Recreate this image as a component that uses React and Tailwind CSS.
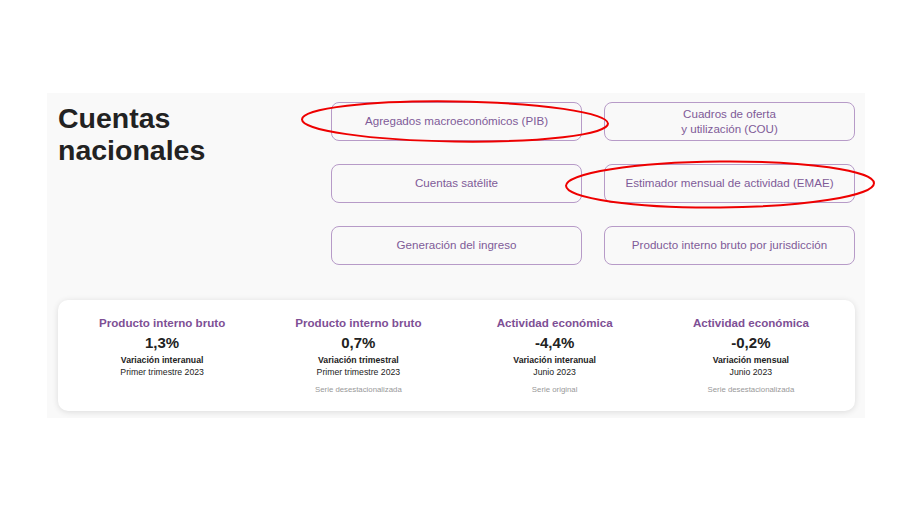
import React from 'react';

const links = [
    ['Agregados macroeconómicos (PIB)'],
    ['Cuadros de oferta', 'y utilización (COU)'],
    ['Cuentas satélite'],
    ['Estimador mensual de actividad (EMAE)'],
    ['Generación del ingreso'],
    ['Producto interno bruto por jurisdicción'],
];

const stats = [
    { title: 'Producto interno bruto', value: '1,3%', label: 'Variación interanual', period: 'Primer trimestre 2023', note: '' },
    { title: 'Producto interno bruto', value: '0,7%', label: 'Variación trimestral', period: 'Primer trimestre 2023', note: 'Serie desestacionalizada' },
    { title: 'Actividad económica', value: '-4,4%', label: 'Variación interanual', period: 'Junio 2023', note: 'Serie original' },
    { title: 'Actividad económica', value: '-0,2%', label: 'Variación mensual', period: 'Junio 2023', note: 'Serie desestacionalizada' },
];

const App = () => {
    return (
        <div className="relative w-[912px] h-[511px] bg-white font-['Liberation_Sans',Arial,sans-serif]">
            <div className="pt-[93px] pl-[47px]">
                <div className="w-[818px] h-[325px] bg-[#f9f9f9] pt-[9px] pl-[11px] pr-[10px]">
                    <div className="flex">
                        <h1 className="w-[273px] shrink-0 text-[28.5px] leading-[32px] font-bold text-[#222]">
                            Cuentas<br />nacionales
                        </h1>
                        <div className="grid grid-cols-2 gap-x-[22px] gap-y-[23px] w-[524px] shrink-0">
                            {links.map((lines, i) => (
                                <a
                                    key={i}
                                    className="h-[39px] pb-[2px] flex flex-col items-center justify-center border border-[#b79bc8] rounded-lg text-[11.6px] leading-[15px] text-[#7f5b98] text-center cursor-pointer"
                                >
                                    {lines.map((l) => (
                                        <span key={l}>{l}</span>
                                    ))}
                                </a>
                            ))}
                        </div>
                    </div>
                    <div className="mt-[35px] h-[111px] bg-white rounded-[10px] shadow-[0_1px_6px_rgba(0,0,0,0.12)] grid grid-cols-4 px-[6px] pt-[15px]">
                        {stats.map((s, i) => (
                            <div key={i} className="flex flex-col items-center text-center">
                                <h3 className="text-[11.6px] leading-[15px] font-bold text-[#7e4f95]">{s.title}</h3>
                                <p className="mt-[3px] text-[15px] leading-[19px] font-bold text-[#222]">{s.value}</p>
                                <p className="mt-[2px] text-[8.7px] leading-[12px] font-bold text-[#222]">{s.label}</p>
                                <p className="text-[8.7px] leading-[12px] text-[#222]">{s.period}</p>
                                {s.note && <p className="mt-[7px] text-[7.8px] leading-[10px] text-[#999]">{s.note}</p>}
                            </div>
                        ))}
                    </div>
                </div>
            </div>
            <svg className="absolute inset-0 pointer-events-none" width="912" height="511" viewBox="0 0 912 511">
                <ellipse cx="455" cy="121.5" rx="153" ry="20" transform="rotate(0.8 455 121.5)" fill="none" stroke="#ee0000" strokeWidth="2" />
                <ellipse cx="720" cy="184.5" rx="154" ry="23" transform="rotate(-0.5 720 184.5)" fill="none" stroke="#ee0000" strokeWidth="2" />
            </svg>
        </div>
    );
};

export default App;
